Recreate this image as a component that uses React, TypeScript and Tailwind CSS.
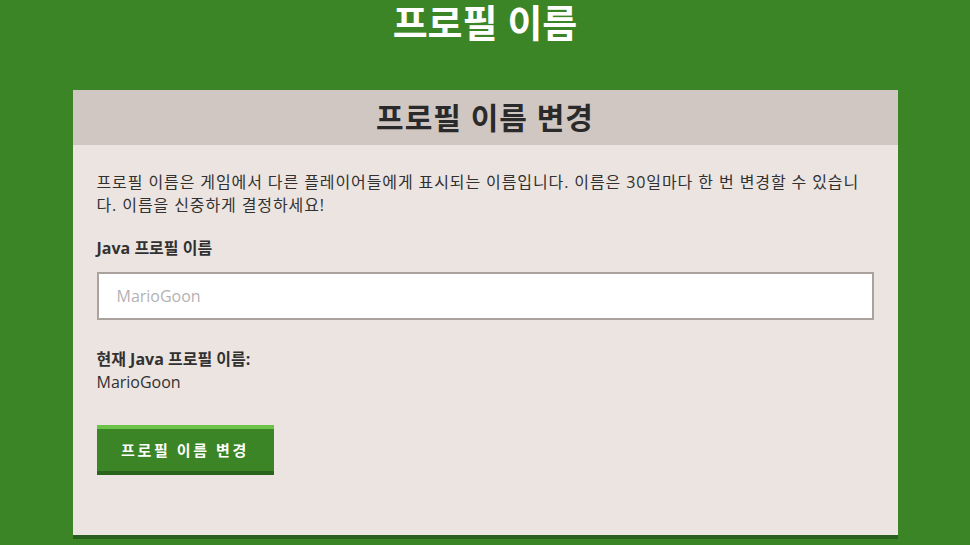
export default function App() {
  return (
    <div
      className="min-h-[545px] bg-[#3c8527] pb-10"
      style={{ fontFamily: '"Open Sans", "Noto Sans CJK KR", sans-serif' }}
    >
      <h1 className="text-center text-[38px] font-bold leading-[45px] text-white">
        프로필 이름
      </h1>
      <div className="mx-auto mt-[45px] w-[825px] border-b-4 border-[#2a5e1f] bg-[#ece4e1]">
        <div className="flex h-[55px] items-center justify-center bg-[#d0c6c2]">
          <h2 className="text-[30px] font-bold tracking-[1px] text-[#2a2a2a]">
            프로필 이름 변경
          </h2>
        </div>
        <div className="px-6 pb-[60px] pt-[26px] text-[16px] text-[#313131]">
          <p className="leading-[23px] tracking-[0.9px]">
            프로필 이름은 게임에서 다른 플레이어들에게 표시되는 이름입니다. 이름은 30일마다 한 번 변경할 수 있습니다. 이름을 신중하게 결정하세요!
          </p>
          <label className="mt-[20px] block font-bold leading-[23px]">
            Java 프로필 이름
          </label>
          <input
            type="text"
            placeholder="MarioGoon"
            className="mt-[12px] block h-[48px] w-full border-2 border-[#aba29e] bg-white px-[18px] text-[16px] placeholder:text-[#b4b2b4] focus:outline-none"
          />
          <div className="mt-[28px] font-bold leading-[23px]">현재 Java 프로필 이름:</div>
          <div className="leading-[23px]">MarioGoon</div>
          <button
            type="button"
            className="mt-[31px] h-[50px] w-[177px] border-b-4 border-t-4 border-b-[#2a641c] border-t-[#6cc349] bg-[#3c8527] text-[15px] font-bold tracking-[2.6px] text-white"
          >
            프로필 이름 변경
          </button>
        </div>
      </div>
    </div>
  );
}
